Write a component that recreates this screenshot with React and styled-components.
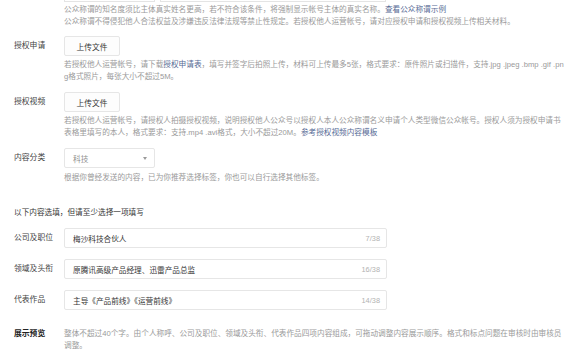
import React from "react";
import styled, { createGlobalStyle } from "styled-components";

const Global = createGlobalStyle`
  html, body { margin: 0; padding: 0; background: #fff; }
  body {
    font-family: "Liberation Sans", "Noto Sans CJK SC", sans-serif;
    color: #353535;
    width: 576px;
    height: 356px;
    overflow: hidden;
  }
`;

const Page = styled.div`
  padding: 0 0 0 14px;
  width: 562px;
  box-sizing: border-box;
`;

const TopFields = styled.div`
  display: flex;
  gap: 5px;
  margin-left: 50px;
  margin-top: -18px;
`;

const TopBox = styled.div`
  width: ${(p) => p.$w}px;
  height: 20px;
  border: 1px solid #e4e4e4;
  box-sizing: border-box;
`;

const Row = styled.div`
  display: grid;
  grid-template-columns: 50px 1fr;
  align-items: center;
  margin-top: ${(p) => p.$mt || 0}px;
`;

const Label = styled.div`
  font-size: 7.8px;
  line-height: 12px;
  color: ${(p) => (p.$strong ? "#222" : "#444")};
  font-weight: ${(p) => (p.$strong ? 600 : 400)};
  align-self: ${(p) => (p.$top ? "start" : "center")};
`;

const Desc = styled.div`
  margin: ${(p) => p.$mt || 0}px 0 0 50px;
  font-size: 7.65px;
  line-height: 12px;
  color: #9a9a9a;
  width: 500px;
  word-break: break-all;
`;

const PreviewText = styled.div`
  font-size: 7.65px;
  line-height: 12px;
  color: #9a9a9a;
  width: 500px;
  word-break: break-all;
`;

const Link = styled.span`
  color: #576b95;
`;

const UploadButton = styled.button`
  width: 56px;
  height: 20px;
  padding: 0;
  border: 1px solid #e6e6e6;
  border-radius: 2px;
  background: #fdfdfd;
  font-family: inherit;
  font-size: 7.7px;
  color: #353535;
  justify-self: start;
`;

const Select = styled.div`
  width: 91px;
  height: 20px;
  box-sizing: border-box;
  border: 1px solid #e6e6e6;
  border-radius: 2px;
  display: flex;
  align-items: center;
  justify-content: space-between;
  padding: 0 7px 0 8px;
  font-size: 7.7px;
  color: #8f8f8f;
`;

const Caret = styled.span`
  width: 0;
  height: 0;
  border-left: 2.5px solid transparent;
  border-right: 2.5px solid transparent;
  border-top: 3px solid #9a9a9a;
`;

const SectionTitle = styled.div`
  margin-top: 23px;
  font-size: 7.65px;
  line-height: 12px;
  color: #353535;
`;

const InputBox = styled.div`
  width: 323px;
  height: 20px;
  box-sizing: border-box;
  border: 1px solid #e6e6e6;
  border-radius: 2px;
  display: flex;
  align-items: center;
  justify-content: space-between;
  padding: 0 6px 0 8px;
  font-size: 7.65px;
  color: #353535;
`;

const Counter = styled.span`
  font-size: 7.4px;
  color: #b2b2b2;
`;

const fields = [
  { label: "公司及职位", value: "梅沙科技合伙人", count: "7/38", mt: 9 },
  { label: "领域及头衔", value: "原腾讯高级产品经理、迅雷产品总监", count: "16/38", mt: 11 },
  { label: "代表作品", value: "主导《产品前线》《运营前线》", count: "14/38", mt: 11 },
];

export default function App() {
  return (
    <>
      <Global />
      <Page>
        <TopFields>
          <TopBox $w={91} />
          <TopBox $w={226} />
        </TopFields>
        <Desc $mt={2}>
          公众称谓的知名度须比主体真实姓名更高，若不符合该条件，将强制显示帐号主体的真实名称。<Link>查看公众称谓示例</Link>
          <br />
          公众称谓不得侵犯他人合法权益及涉嫌违反法律法规等禁止性规定。若授权他人运营帐号，请对应授权申请和授权视频上传相关材料。
        </Desc>

        <Row $mt={8}>
          <Label>授权申请</Label>
          <UploadButton>上传文件</UploadButton>
        </Row>
        <Desc $mt={3}>
          若授权他人运营帐号，请下载<Link>授权申请表</Link>，填写并签字后拍照上传，材料可上传最多5张，格式要求：原件照片或扫描件，支持.jpg .jpeg .bmp .gif .png格式照片，每张大小不超过5M。
        </Desc>

        <Row $mt={9}>
          <Label>授权视频</Label>
          <UploadButton>上传文件</UploadButton>
        </Row>
        <Desc $mt={3}>
          若授权他人运营帐号，请授权人拍摄授权视频，说明授权他人公众号以授权人本人公众称谓名义申请个人类型微信公众帐号。授权人须为授权申请书表格里填写的本人，格式要求：支持.mp4 .avi格式，大小不超过20M。<Link>参考授权视频内容模板</Link>
        </Desc>

        <Row $mt={9}>
          <Label>内容分类</Label>
          <Select>
            科技
            <Caret />
          </Select>
        </Row>
        <Desc $mt={4}>根据你曾经发送的内容，已为你推荐选择标签，你也可以自行选择其他标签。</Desc>

        <SectionTitle>以下内容选填，但请至少选择一项填写</SectionTitle>

        {fields.map((f) => (
          <Row key={f.label} $mt={f.mt}>
            <Label>{f.label}</Label>
            <InputBox>
              <span>{f.value}</span>
              <Counter>{f.count}</Counter>
            </InputBox>
          </Row>
        ))}

        <Row $mt={18}>
          <Label $strong $top>展示预览</Label>
          <PreviewText>
            整体不超过40个字。由个人称呼、公司及职位、领域及头衔、代表作品四项内容组成，可拖动调整内容展示顺序。格式和标点问题在审核时由审核员调整。
          </PreviewText>
        </Row>
      </Page>
    </>
  );
}
